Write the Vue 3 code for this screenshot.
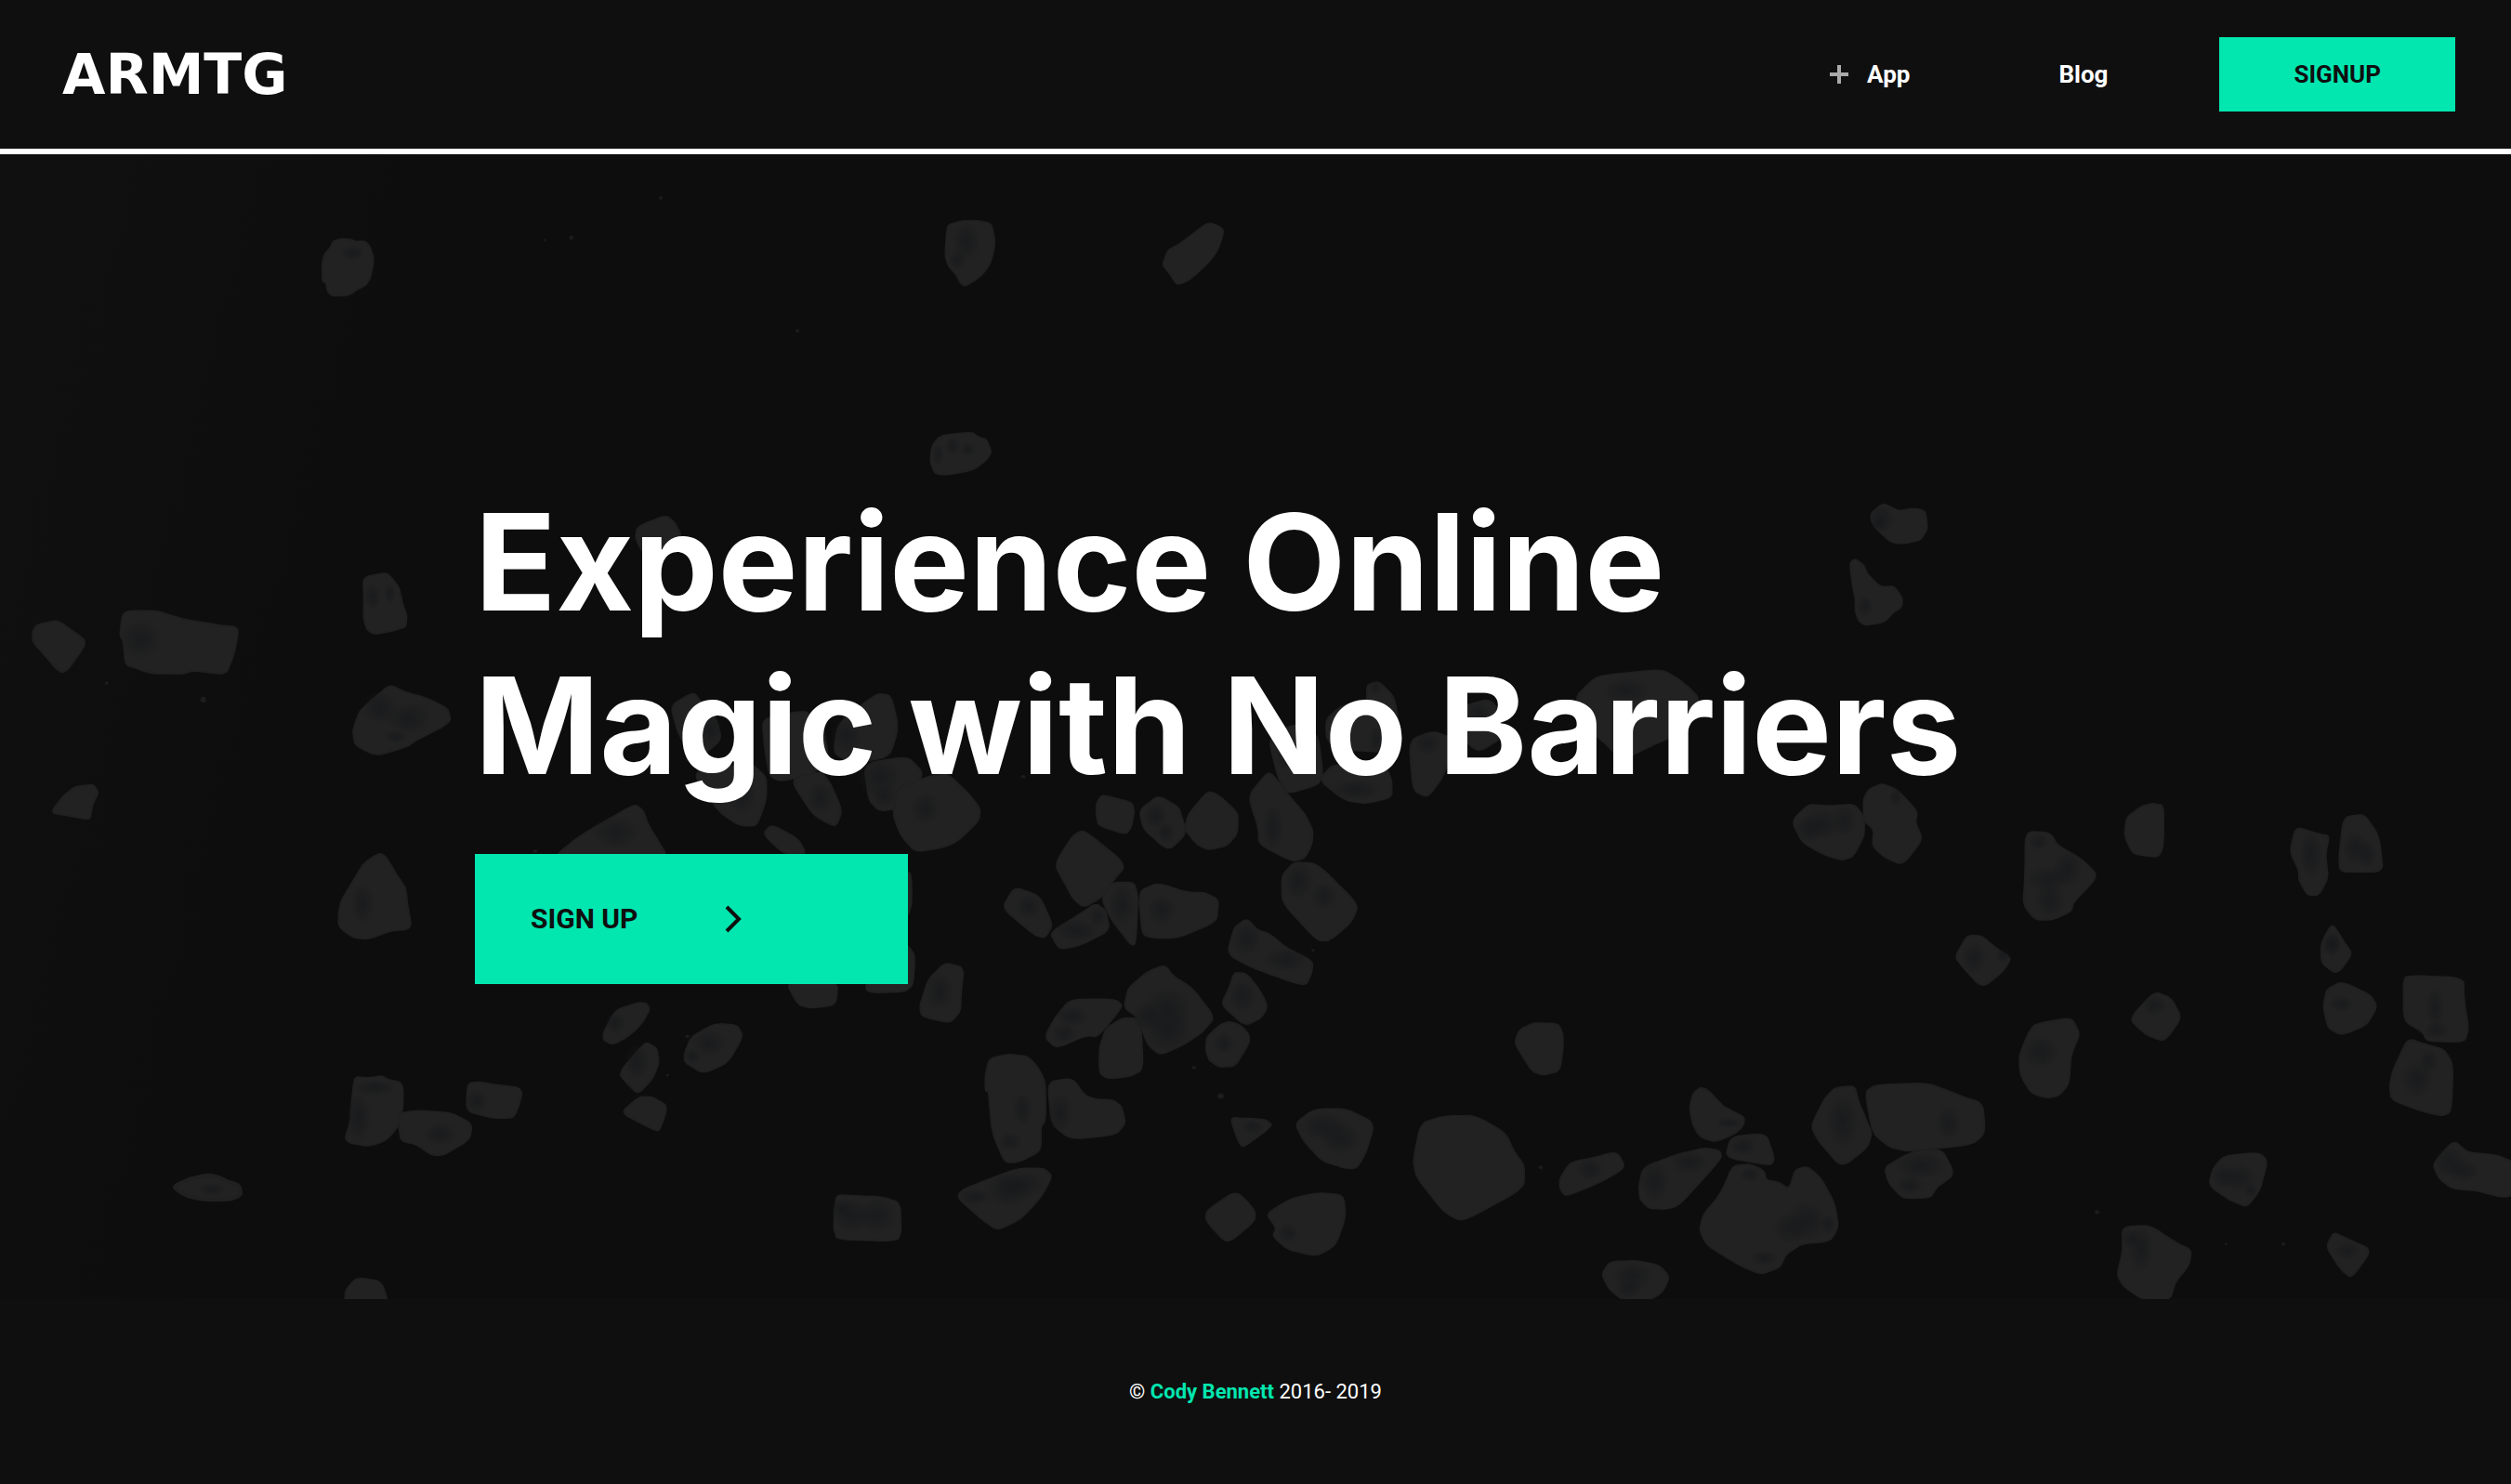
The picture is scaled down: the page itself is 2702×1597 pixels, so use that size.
<script setup>
// Gravel scattered over the hero. Each cluster has its own origin and scale;
// stones are outlines, shades are soft hollows [cx, cy, rx, ry], dots are grit [cx, cy, r].
const clusters = [
  {
    at: 'translate(0 170) scale(.4464)',
    stones: [
      '820,195 845,196 858,202 880,200 893,215 901,245 893,290 880,308 862,316 840,331 800,333 789,320 786,300 777,298 777,250 783,230 797,215 803,200',
      '875,1020 885,1008 933,1000 950,1020 962,1035 970,1075 980,1100 979,1130 945,1141 900,1148 885,1138 876,1110 878,1060',
      '78,1140 90,1125 135,1115 155,1125 160,1130 203,1160 205,1175 165,1232 150,1240 135,1232 100,1190 80,1168',
      '296,1092 375,1092 405,1100 440,1112 520,1125 568,1130 574,1142 566,1190 548,1238 535,1244 465,1236 440,1244 360,1242 330,1230 302,1222 297,1165 289,1150',
      '940,1270 975,1287 1030,1303 1080,1327 1087,1360 1000,1405 980,1420 905,1441 855,1415 850,1380 865,1335 905,1298',
      '127,1572 150,1540 180,1515 225,1510 238,1530 222,1560 218,1592 205,1594 165,1585 130,1580'
    ],
    shades: [[850, 230, 30, 20], [898, 1058, 22, 32], [940, 1050, 14, 26], [340, 1160, 50, 50], [915, 1325, 45, 40], [985, 1350, 55, 40], [955, 1395, 30, 16]],
    dots: [[490, 1306, 7], [257, 1266, 4], [1377, 192, 5], [1314, 198, 3]]
  },
  {
    at: 'translate(330 860) scale(.4464 .3571)',
    stones: [
      '175,162 190,172 215,225 238,265 243,320 252,375 245,392 200,398 145,423 110,417 78,385 76,345 85,300 110,250 135,195',
      '605,163 665,105 780,22 795,18 812,35 822,75 865,160 870,200 600,200',
      '115,835 150,840 183,833 195,845 225,852 232,870 232,930 222,985 190,1030 150,1046 105,1038 92,1022 105,975 108,920',
      '225,945 270,938 350,945 398,978 394,1025 330,1074 300,1072 265,1042 228,1030 222,990',
      '388,855 420,852 440,858 510,868 520,885 505,945 495,962 440,960 385,940',
      '800,612 820,615 827,635 805,680 775,715 738,740 715,725 716,700 745,635',
      '818,732 845,750 849,800 830,850 798,888 775,860 755,832 765,805 800,755',
      '985,675 1038,680 1052,715 1015,795 955,828 910,792 912,760 928,715',
      '800,898 830,896 866,920 866,945 850,1000 835,995 770,955 763,938',
      '1278,1192 1325,1195 1385,1198 1430,1215 1433,1300 1425,1332 1280,1328 1271,1300 1272,1240',
      '92,1530 93,1480 120,1442 180,1452 200,1530',
      '1440,215 1455,222 1458,250 1458,320 1449,350 1440,350',
      '1349,540 1349,583 1440,582 1462,560 1466,470 1449,440 1420,440',
      '1155,550 1185,622 1220,630 1275,620 1280,550',
      '1540,492 1584,507 1577,590 1576,640 1550,675 1482,655 1478,620 1500,540',
      '1100,105 1120,76 1185,120 1205,165 1150,165'
    ],
    shades: [[135, 315, 28, 65], [745, 100, 60, 50], [125, 960, 30, 80], [165, 870, 55, 25], [322, 1010, 42, 36], [410, 910, 28, 40], [745, 675, 26, 32], [796, 792, 30, 55], [970, 735, 42, 42], [930, 775, 22, 26], [1315, 1255, 48, 55], [1375, 1255, 48, 60], [1290, 1235, 28, 32], [1525, 580, 36, 60]],
    dots: [[551, 157, 5], [918, 715, 5], [870, 832, 4]]
  },
  {
    at: 'translate(480 500) scale(.5485 .3699)',
    stones: [
      '375,180 430,147 447,165 463,210 425,240 388,260 372,215',
      '440,700 485,662 500,690 530,740 540,800 500,850 460,800',
      '620,740 690,718 710,720 740,770 750,850 720,900 655,922 635,905 625,820',
      '770,750 845,665 873,672 887,765 870,850 800,870 760,840',
      '820,870 905,848 938,900 890,1000 852,1008 830,980',
      '885,940 950,905 985,900 1030,965 1047,1000 1046,1035 1000,1100 965,1118 920,1126 893,1080 877,1020',
      '675,915 735,892 755,930 776,1005 765,1055 720,1020',
      '480,890 600,870 628,910 628,970 610,1052 575,1050 535,1010'
    ],
    shades: [[520, 770, 22, 50], [785, 790, 30, 55], [850, 910, 45, 60], [860, 965, 26, 32], [735, 970, 28, 50], [580, 960, 30, 60], [940, 1000, 30, 50]],
    dots: [[1131, 908, 4]]
  },
  {
    at: 'translate(1300 500) scale(.5485 .3333)',
    stones: [
      '720,750 760,685 800,675 890,660 930,700 965,755 940,860 880,900 830,940 810,955 780,900 740,850',
      '312,710 335,700 365,750 375,850 365,930 250,920 232,880 232,820 265,775 312,770',
      '118,885 170,835 215,870 225,1000 215,1035 155,1063 140,1020',
      '218,1020 245,965 350,980 360,1020 360,1075 310,1095 270,1085',
      '395,890 440,860 485,885 460,1010 430,1075 402,1050',
      '470,815 500,780 550,755 575,800 578,880 530,930 490,870'
    ],
    shades: [[820, 730, 50, 40], [328, 720, 14, 26], [330, 890, 18, 50], [150, 930, 22, 60], [290, 1050, 50, 34], [430, 900, 28, 40], [530, 800, 26, 36]],
    dots: []
  },
  {
    at: 'translate(1900 500) scale(.3333)',
    stones: [
      '380,124 430,150 475,140 515,148 524,205 500,245 440,256 405,252 360,212 340,180 340,155',
      '285,303 315,320 330,355 372,395 415,392 442,430 440,460 415,475 385,508 322,520 300,505 288,470 290,440 280,390 271,320'
    ],
    shades: [[375, 175, 42, 46], [365, 190, 26, 24], [320, 460, 28, 36]],
    dots: []
  },
  {
    at: 'translate(960 200) scale(.3333)',
    stones: [
      '180,125 230,112 280,112 322,122 333,185 318,250 290,290 235,325 220,315 205,285 182,260 170,225 175,150',
      '1020,116 1065,135 1070,150 1055,200 1030,240 960,305 918,320 900,290 875,260 875,245 890,207 935,182',
      '155,805 260,795 280,812 305,818 322,862 300,890 262,918 180,934 137,930 122,890 127,840'
    ],
    shades: [[240, 180, 46, 66], [210, 240, 30, 34], [148, 868, 20, 38], [195, 840, 26, 34], [245, 852, 28, 24]],
    dots: []
  },
  {
    at: 'translate(1000 820) scale(.4464 .3699)',
    stones: [
      '415,98 425,98 490,118 494,150 485,195 472,211 408,185 403,160 403,118',
      '507,140 545,103 560,103 600,130 612,170 618,210 577,259 515,195',
      '670,86 690,90 745,148 742,210 715,245 672,256 645,240 615,195 625,150',
      '815,30 830,40 865,95 905,150 925,200 922,240 905,280 875,290 795,240 793,190 768,100',
      '372,196 475,298 440,350 415,395 372,423 348,400 325,350 302,298 345,215',
      '205,364 265,388 298,475 278,512 255,505 175,425',
      '300,490 365,440 400,412 425,430 435,490 360,535 315,545 293,505',
      '440,350 495,350 503,400 497,530 487,533 455,485 435,450 415,395',
      '505,375 550,352 625,380 665,380 697,400 693,465 600,512 550,513 513,505',
      '880,290 935,295 1035,415 1018,465 965,520 935,520 850,410 850,330',
      '765,455 790,488 820,500 860,540 925,580 920,620 905,653 790,605 718,560 735,480',
      '735,612 765,615 800,670 815,712 800,745 760,768 703,705 722,660',
      '700,765 720,755 745,762 770,790 772,815 738,885 700,888 675,870 667,840 668,800',
      '568,590 590,625 632,655 688,742 660,785 610,825 555,853 525,820 500,740 470,715 478,660 525,610',
      '340,690 450,690 467,712 405,800 380,795 305,833 278,800 305,740',
      '410,830 425,775 465,745 498,745 510,770 515,895 485,915 430,922 410,905',
      '145,862 195,849 240,858 265,895 280,935 280,1045 268,1060 270,1130 215,1165 182,1165 155,1088 150,1060 143,960 135,955 135,910',
      '285,930 345,920 375,970 400,982 440,982 463,1000 473,1050 450,1085 340,1098 295,1055',
      '55,1255 210,1182 275,1182 297,1203 270,1265 220,1330 165,1363 130,1335',
      '725,1035 760,1036 810,1040 828,1057 757,1122 745,1105',
      '882,1050 928,1010 1005,1008 1073,1050 1055,1130 1030,1182 1000,1182 945,1160 900,1100',
      '740,1246 785,1305 785,1335 718,1404 667,1335 668,1305',
      '812,1315 870,1270 940,1253 998,1260 1004,1320 980,1405 935,1438 865,1420 828,1380 836,1355',
      '1185,1050 1240,1030 1315,1028 1390,1080 1410,1135 1435,1175 1433,1230 1410,1255 1285,1338 1240,1310 1175,1210 1166,1160'
    ],
    shades: [[545, 155, 30, 40], [570, 205, 22, 32], [828, 190, 26, 70], [240, 420, 32, 38], [355, 490, 55, 34], [405, 450, 22, 32], [465, 415, 34, 65], [560, 430, 36, 46], [890, 345, 38, 60], [950, 390, 34, 40], [765, 515, 36, 50], [860, 575, 55, 36], [755, 680, 34, 50], [710, 818, 26, 34], [575, 720, 60, 70], [575, 780, 58, 66], [525, 740, 36, 42], [325, 790, 32, 30], [345, 740, 40, 32], [225, 1010, 26, 50], [195, 1105, 30, 28], [315, 1020, 30, 60], [190, 1245, 55, 52], [220, 1230, 60, 42], [110, 1265, 40, 26], [780, 1062, 28, 24], [950, 1060, 60, 46], [990, 1095, 52, 52], [865, 1370, 26, 30]],
    dots: [[702, 972, 8], [638, 889, 5], [227, 43, 5], [925, 548, 4], [1473, 1179, 5]]
  },
  {
    at: 'translate(1600 820) scale(.3827)',
    stones: [
      '77,790 90,755 130,733 200,736 213,760 215,800 205,870 155,881 125,868',
      '857,165 905,118 960,124 1030,118 1055,145 1062,170 1060,210 1030,265 1000,277 945,260 885,225',
      '1058,105 1075,75 1110,61 1150,75 1190,115 1210,140 1205,170 1225,215 1190,265 1165,288 1120,270 1083,235 1088,190 1060,165',
      '1350,488 1390,488 1430,522 1475,552 1450,590 1393,635 1340,580 1315,548',
      '570,970 580,930 600,915 620,920 665,970 725,998 720,1025 690,1050 640,1068 600,1055 578,1020',
      '685,1055 765,1045 790,1055 808,1115 800,1135 670,1112',
      '205,1170 235,1125 290,1115 365,1095 390,1140 320,1182 220,1222 205,1200',
      '440,1140 520,1108 610,1085 655,1092 660,1115 540,1248 500,1258 455,1255 430,1230 427,1190',
      '690,1135 740,1130 780,1150 785,1175 820,1182 850,1200 865,1148 900,1136 940,1170 980,1245 988,1310 965,1348 885,1355 840,1385 825,1420 770,1442 700,1410 620,1360 598,1320 606,1275 660,1210',
      '910,1025 950,945 980,915 1035,910 1045,955 1065,1000 1083,1045 1070,1085 997,1140 935,1070',
      '1063,930 1090,908 1240,902 1330,938 1395,960 1400,1045 1365,1075 1260,1088 1180,1095 1130,1082 1085,1045',
      '1117,1140 1190,1097 1280,1088 1315,1160 1265,1195 1248,1225 1170,1228 1130,1185',
      '322,1440 345,1405 420,1402 485,1415 514,1448 495,1490 460,1512 380,1512 345,1485'
    ],
    shades: [[905, 190, 40, 40], [940, 175, 60, 46], [1005, 165, 36, 46], [1150, 100, 20, 28], [1370, 550, 36, 46], [1450, 545, 22, 22], [680, 1015, 40, 16], [720, 1080, 40, 28], [290, 1145, 40, 34], [470, 1180, 44, 60], [570, 1125, 56, 34], [740, 1160, 30, 22], [855, 1310, 52, 46], [900, 1290, 60, 60], [960, 1300, 22, 30], [780, 1395, 40, 22], [1000, 1010, 46, 80], [1298, 1015, 36, 52], [1220, 1135, 75, 40], [1190, 1190, 40, 28], [410, 1445, 60, 38], [400, 1480, 40, 28]],
    dots: [[152, 1140, 5]]
  },
  {
    at: 'translate(2050 820) scale(.4158 .3827)',
    stones: [
      '312,195 375,198 395,235 460,275 500,320 435,395 430,420 380,445 335,443 305,400 310,320',
      '572,158 610,125 640,116 670,122 668,240 655,268 590,260 567,208',
      '1010,182 1070,202 1098,208 1088,260 1095,325 1070,375 1042,375 1020,335 1018,300 996,255',
      '1135,155 1188,146 1225,205 1237,295 1225,308 1180,310 1125,308 1123,260',
      '1105,454 1130,495 1158,540 1118,597 1078,567 1076,510',
      '1130,617 1205,655 1222,688 1195,740 1130,768 1095,750 1082,690 1090,640',
      '1295,600 1445,605 1447,670 1458,750 1448,788 1350,785 1340,760 1290,728 1290,620',
      '1300,777 1350,795 1395,808 1418,850 1413,985 1390,995 1330,980 1258,950 1253,910 1265,860',
      '645,645 690,665 716,720 670,787 620,765 580,722',
      '335,737 430,718 453,765 430,820 424,905 400,938 365,945 325,930 298,880 295,825 318,765',
      '825,1108 915,1098 938,1120 920,1200 885,1252 840,1232 787,1192 795,1145',
      '1420,1063 1455,1098 1530,1105 1575,1125 1575,1220 1540,1224 1480,1205 1415,1200 1380,1170 1365,1130',
      '562,1308 632,1302 700,1350 741,1372 735,1415 698,1465 687,1512 615,1512 565,1475 548,1440 563,1375',
      '1108,1322 1145,1340 1208,1372 1155,1452 1130,1430 1090,1365'
    ],
    shades: [[345, 225, 26, 24], [420, 300, 40, 55], [370, 330, 60, 40], [375, 390, 42, 52], [1050, 260, 32, 70], [1165, 240, 34, 52], [1195, 260, 28, 42], [1105, 515, 26, 36], [1105, 510, 22, 30], [1130, 680, 34, 26], [1372, 690, 24, 60], [1375, 755, 34, 26], [1325, 890, 44, 56], [1355, 840, 26, 34], [645, 685, 34, 30], [350, 815, 50, 50], [825, 1165, 32, 36], [865, 1170, 44, 42], [895, 1205, 18, 22], [1410, 1125, 42, 46], [1445, 1150, 42, 32], [610, 1370, 34, 70], [585, 1340, 28, 30], [1145, 1375, 34, 28]],
    dots: [[497, 1266, 6], [979, 1355, 5], [830, 1356, 3]]
  },
  {
    at: 'translate(0 0)',
    stones: ['186,1277 205,1268 228,1264 242,1270 258,1276 259,1286 245,1291 215,1291 197,1285'],
    shades: [[228, 1280, 16, 8]],
    dots: [[711, 213, 2], [858, 356, 2]]
  }
]

// Turns an outline into a closed path whose corners are worn round.
function worn(outline) {
  const pts = outline.split(' ').map((pair) => pair.split(',').map(Number))
  const along = (a, b, t) => [Math.round(a[0] + (b[0] - a[0]) * t), Math.round(a[1] + (b[1] - a[1]) * t)]
  const steps = pts.map((p, i) => {
    const prev = pts[(i + pts.length - 1) % pts.length]
    const next = pts[(i + 1) % pts.length]
    return `${i ? 'L' : 'M'}${along(p, prev, 0.3)}Q${p} ${along(p, next, 0.3)}`
  })
  return steps.join('') + 'Z'
}
</script>

<template>
  <div class="page">
    <header class="header">
      <a class="logo" href="#">ARMTG</a>
      <nav class="nav">
        <a class="link" href="#app">
          <svg class="plus" viewBox="0 0 20 20" aria-hidden="true"><path d="M10 0v20M0 10h20" /></svg>
          App
        </a>
        <a class="link" href="#blog">Blog</a>
        <button class="signup" type="button">SIGNUP</button>
      </nav>
    </header>

    <main class="hero">
      <svg class="gravel" viewBox="0 166 2702 1232" preserveAspectRatio="xMidYMid slice" aria-hidden="true">
        <defs>
          <radialGradient id="hollow">
            <stop offset="0" stop-color="#15171a" stop-opacity=".65" />
            <stop offset=".6" stop-color="#17181a" stop-opacity=".35" />
            <stop offset="1" stop-color="#1a1a1a" stop-opacity="0" />
          </radialGradient>
        </defs>
        <g v-for="(cluster, i) in clusters" :key="i" :transform="cluster.at">
          <path v-for="(outline, n) in cluster.stones" :key="'s' + n" class="stone" :d="worn(outline)" />
          <ellipse
            v-for="([cx, cy, rx, ry], n) in cluster.shades"
            :key="'h' + n"
            :cx="cx"
            :cy="cy"
            :rx="rx"
            :ry="ry"
            fill="url(#hollow)"
          />
          <circle v-for="([cx, cy, r], n) in cluster.dots" :key="'d' + n" class="grit" :cx="cx" :cy="cy" :r="r" />
        </g>
      </svg>
      <div class="content">
        <h1 class="title">Experience Online<br />Magic with No Barriers</h1>
        <button class="cta" type="button">
          SIGN UP
          <svg class="chevron" viewBox="0 0 20 30" aria-hidden="true"><path d="M2 2l13 13L2 28" /></svg>
        </button>
      </div>
    </main>

    <footer class="footer">
      <p>© <a href="#author">Cody Bennett</a> 2016- 2019</p>
    </footer>
  </div>
</template>

<style>
body {
  margin: 0;
  background: #0f0f0f;
}
</style>

<style scoped>
.page {
  display: flex;
  flex-direction: column;
  min-height: 100vh;
  background: #0f0f0f;
  color: #fff;
  font-family: Roboto, "Liberation Sans", sans-serif;
}

.header {
  display: flex;
  align-items: center;
  justify-content: space-between;
  height: 160px;
  padding: 0 60px 0 67px;
  border-bottom: 6px solid #fff;
}

.logo {
  color: #fff;
  font-family: "DejaVu Sans", sans-serif;
  font-size: 60px;
  font-weight: 700;
  line-height: 80px;
  text-decoration: none;
}

.nav {
  display: flex;
  align-items: center;
}

.link {
  display: flex;
  align-items: center;
  gap: 20px;
  padding: 0 80px;
  color: #fff;
  font-size: 26px;
  font-weight: 700;
  line-height: 40px;
  text-decoration: none;
}

.plus {
  width: 20px;
  height: 20px;
  fill: none;
  stroke: #aaa;
  stroke-width: 4;
}

.signup {
  height: 80px;
  margin-left: 40px;
  padding: 0 80px;
  border: 0;
  background: #02e6b0;
  color: #0f0f0f;
  font: 700 26px/40px Roboto, "Liberation Sans", sans-serif;
}

.hero {
  position: relative;
  display: flex;
  flex: 1;
  align-items: center;
  overflow: hidden;
  background: linear-gradient(105deg, #101010, #0d0d0d 18%);
}

.gravel {
  position: absolute;
  inset: 0;
  width: 100%;
  height: 100%;
}

.stone {
  fill: #222;
  stroke: #202020;
  stroke-width: 4;
  stroke-linejoin: round;
}

.grit {
  fill: #1c1c1c;
}

.content {
  position: relative;
  width: 100%;
  max-width: 1680px;
  margin: 0 auto;
}

.title {
  margin: 0 0 50px;
  padding-top: 12px;
  font-family: Inter, "Liberation Sans", sans-serif;
  font-size: 144px;
  font-weight: 700;
  line-height: 176px;
}

.cta {
  display: flex;
  align-items: center;
  gap: 94px;
  width: 466px;
  height: 140px;
  padding: 0 60px;
  border: 0;
  background: #02e6b0;
  color: #0f0f0f;
  font: 700 30px/40px Roboto, "Liberation Sans", sans-serif;
}

.chevron {
  width: 20px;
  height: 30px;
  fill: none;
  stroke: #0f0f0f;
  stroke-width: 4;
}

.footer {
  display: flex;
  align-items: center;
  justify-content: center;
  height: 199px;
}

.footer p {
  margin: 0;
  font-size: 22px;
  line-height: 32px;
}

.footer a {
  color: #02e6b0;
  font-weight: 700;
  text-decoration: none;
}
</style>
